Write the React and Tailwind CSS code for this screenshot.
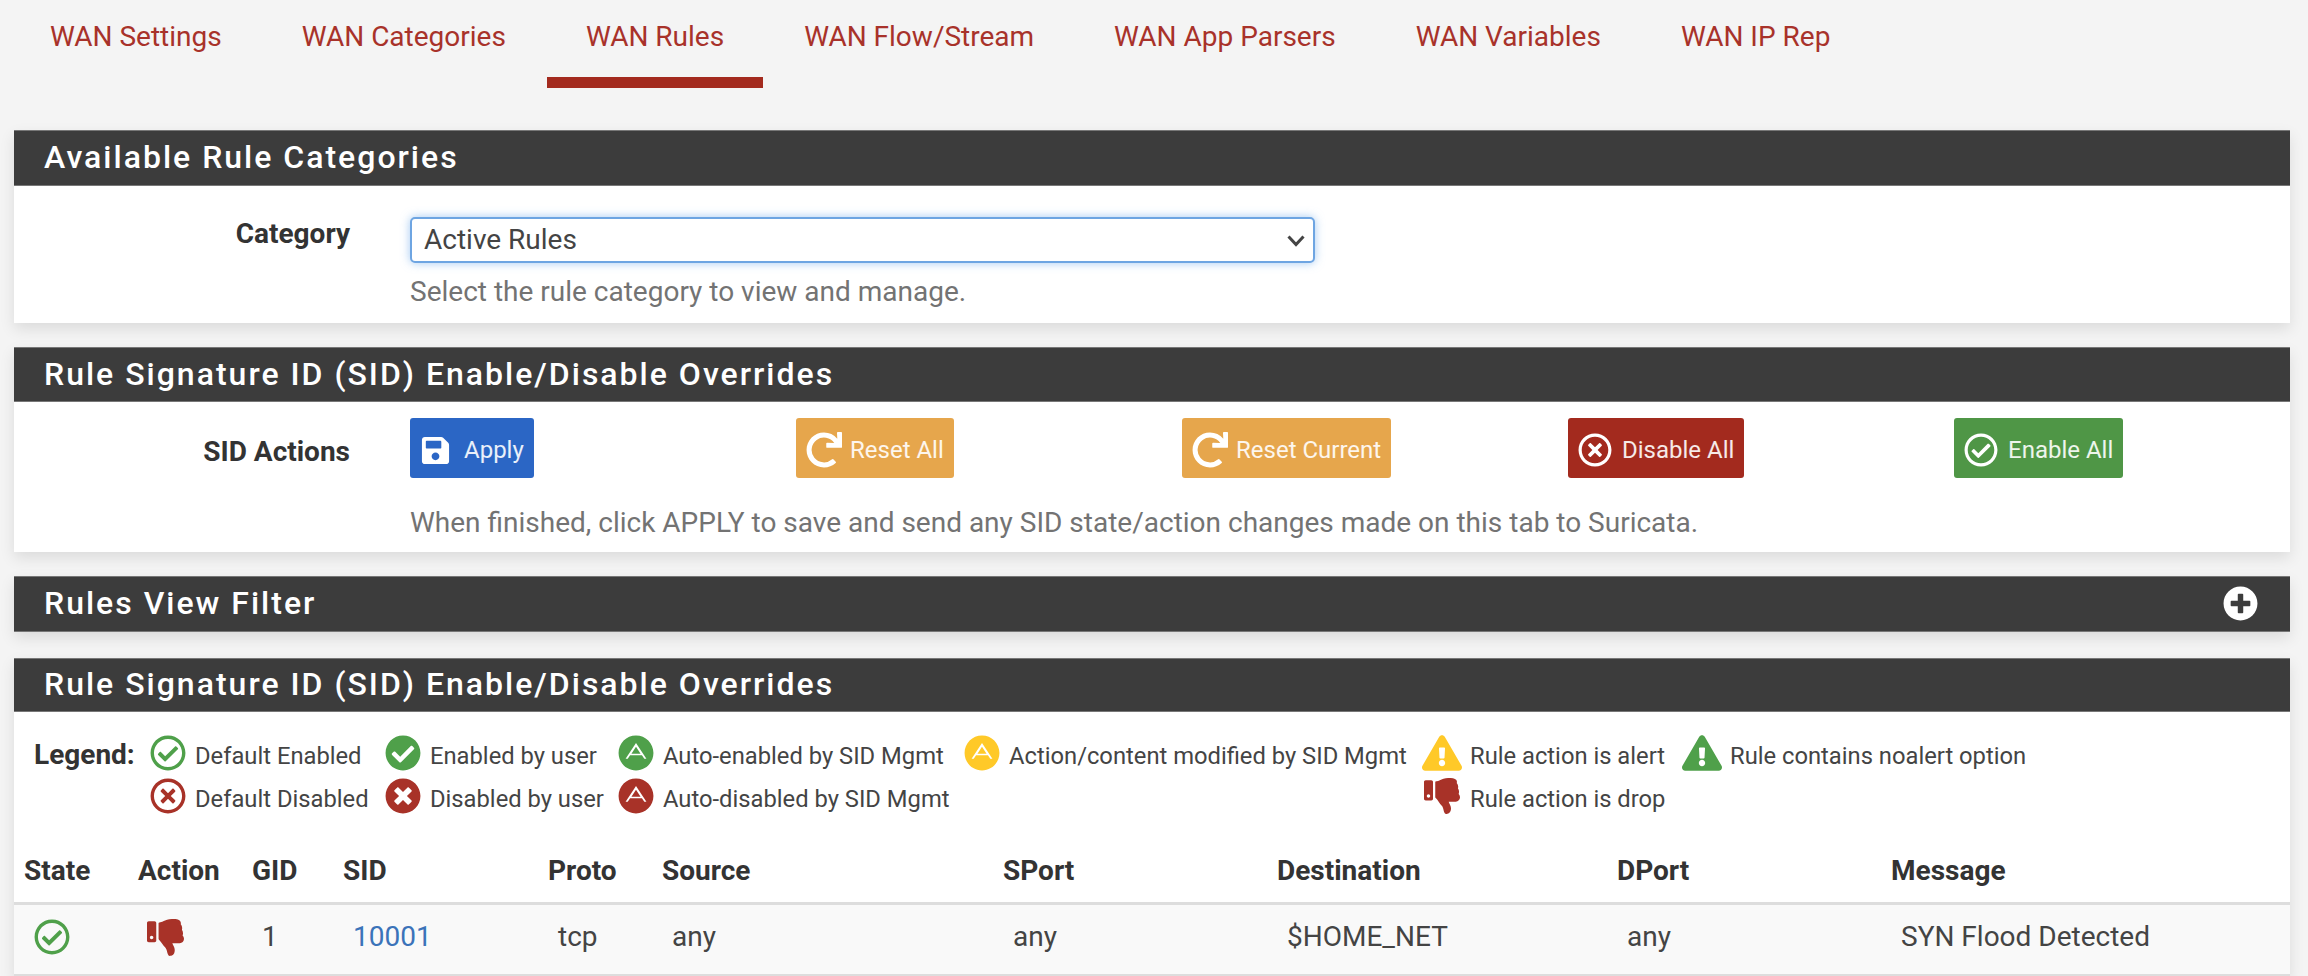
import React from 'react';
import {
    FaRegCheckCircle, FaCheckCircle, FaRegTimesCircle, FaTimesCircle, FaAdn,
    FaExclamationTriangle, FaThumbsDown, FaSave, FaRedo, FaPlusCircle
} from 'react-icons/fa';

const tabs = ['WAN Settings', 'WAN Categories', 'WAN Rules', 'WAN Flow/Stream', 'WAN App Parsers', 'WAN Variables', 'WAN IP Rep'];

const Panel = ({ title, right, headClass, children }) => (
    <section className="bg-white shadow-[0_6px_14px_rgba(0,0,0,0.10)]">
        <h2 className={`flex items-center justify-between bg-[#3c3c3c] border-y border-[#777] pb-[2px] pl-[30px] pr-[32px] text-[32px] font-medium tracking-[2px] text-white ${headClass}`}>
            {title}
            {right}
        </h2>
        {children}
    </section>
);

const ActionButton = ({ icon: Icon, color, iconClass, gap, children }) => (
    <div className="w-[386px] shrink-0">
        <button className={`flex h-[60px] items-center rounded-[3px] px-[10px] pt-[4px] text-[24px] text-white/90 ${color} ${gap}`}>
            <Icon className={`text-white ${iconClass}`} />
            {children}
        </button>
    </div>
);

const LegendItem = ({ icon: Icon, color, wide, children }) => (
    <div className="flex h-[43px] items-center">
        <Icon className={`-mt-[2px] shrink-0 text-[36px] ${color} ${wide ? 'w-[40px]' : 'w-[36px]'}`} />
        <span className={`mt-[6px] whitespace-nowrap text-[23.75px] text-[#444] ${wide ? 'ml-[8px]' : 'ml-[9px]'}`}>{children}</span>
    </div>
);

const App = () => {
    return (
        <div className="h-[976px] overflow-hidden bg-[#f4f4f4] font-['Roboto',sans-serif]">
            {/* Tabs */}
            <nav className="flex pl-[10px] h-[88px]">
                {tabs.map((t) => (
                    <a
                        key={t}
                        className={`flex h-[88px] items-start whitespace-nowrap pt-[16px] text-[28px] text-[#a8322a] ${t === 'WAN Rules' ? 'mx-[1px] border-b-[11px] border-[#a32a1e] px-[39px]' : 'px-[40px]'}`}
                    >
                        {t}
                    </a>
                ))}
            </nav>

            <main className="ml-[14px] mr-[18px] mt-[42px] flex flex-col gap-[24px]">
                <Panel title="Available Rule Categories" headClass="h-[56px]">
                    <div className="flex h-[137px]">
                        <label className="w-[336px] shrink-0 pt-[31px] text-right text-[28px] font-bold leading-[34px] text-[#333]">Category</label>
                        <div className="ml-[60px] pt-[31px]">
                            <div className="relative w-[905px]">
                                <select className="h-[46px] w-full appearance-none rounded-[5px] border-2 border-[#6ea5e2] bg-white pb-[9px] pl-[12px] text-[28px] text-[#444] shadow-[0_0_10px_rgba(102,165,233,0.6)] outline-none">
                                    <option>Active Rules</option>
                                </select>
                                <svg viewBox="0 0 18 13" className="absolute right-[10px] top-[17px] h-[13px] w-[18px]" fill="none" stroke="#444" strokeWidth="3">
                                    <path d="M1.5 2.5 L9 10.5 L16.5 2.5" />
                                </svg>
                            </div>
                            <p className="mt-[12px] text-[28px] leading-[34px] text-[#737373]">Select the rule category to view and manage.</p>
                        </div>
                    </div>
                </Panel>

                <Panel title="Rule Signature ID (SID) Enable/Disable Overrides" headClass="h-[55px]">
                    <div className="flex h-[150px]">
                        <label className="w-[336px] shrink-0 pt-[33px] text-right text-[28px] font-bold leading-[34px] text-[#333]">SID Actions</label>
                        <div className="ml-[60px] pt-[16px]">
                            <div className="flex">
                                <ActionButton icon={FaSave} color="bg-[#2b66c5]" iconClass="text-[31px]" gap="gap-[13px]">Apply</ActionButton>
                                <ActionButton icon={FaRedo} color="bg-[#e6a64c]" iconClass="text-[36px]" gap="gap-[8px]">Reset All</ActionButton>
                                <ActionButton icon={FaRedo} color="bg-[#e6a64c]" iconClass="text-[36px]" gap="gap-[8px]">Reset Current</ActionButton>
                                <ActionButton icon={FaRegTimesCircle} color="bg-[#a32a1e]" iconClass="text-[34px]" gap="gap-[10px]">Disable All</ActionButton>
                                <ActionButton icon={FaRegCheckCircle} color="bg-[#4f9646]" iconClass="text-[34px]" gap="gap-[10px]">Enable All</ActionButton>
                            </div>
                            <p className="mt-[28px] text-[28px] leading-[34px] text-[#737373]">When finished, click APPLY to save and send any SID state/action changes made on this tab to Suricata.</p>
                        </div>
                    </div>
                </Panel>

                <Panel
                    title="Rules View Filter"
                    headClass="h-[56px]"
                    right={<FaPlusCircle className="text-[35px] text-white" />}
                />

                <div className="mt-[2px]">
                    <Panel title="Rule Signature ID (SID) Enable/Disable Overrides" headClass="h-[54px]">
                        {/* Legend */}
                        <div className="flex pt-[20px] pl-[20px]">
                            <span className="w-[116px] shrink-0 text-[28px] font-bold leading-[46px] text-[#333]">Legend:</span>
                            <div className="grid grid-cols-[235px_233px_346px_458px_260px_auto]">
                                <LegendItem icon={FaRegCheckCircle} color="text-[#4fa04a]">Default Enabled</LegendItem>
                                <LegendItem icon={FaCheckCircle} color="text-[#4fa04a]">Enabled by user</LegendItem>
                                <LegendItem icon={FaAdn} color="text-[#4fa04a]">Auto-enabled by SID Mgmt</LegendItem>
                                <LegendItem icon={FaAdn} color="text-[#ffc928]">Action/content modified by SID Mgmt</LegendItem>
                                <LegendItem icon={FaExclamationTriangle} color="text-[#ffc928]" wide>Rule action is alert</LegendItem>
                                <LegendItem icon={FaExclamationTriangle} color="text-[#4fa04a]" wide>Rule contains noalert option</LegendItem>
                                <LegendItem icon={FaRegTimesCircle} color="text-[#a83228]">Default Disabled</LegendItem>
                                <LegendItem icon={FaTimesCircle} color="text-[#a83228]">Disabled by user</LegendItem>
                                <LegendItem icon={FaAdn} color="text-[#a83228]">Auto-disabled by SID Mgmt</LegendItem>
                                <div />
                                <LegendItem icon={FaThumbsDown} color="text-[#a83228]" wide>Rule action is drop</LegendItem>
                            </div>
                        </div>

                        {/* Rules table */}
                        <table className="mt-[35px] w-full table-fixed text-[28px] leading-[34px]">
                            <colgroup>
                                <col className="w-[114px]" />
                                <col className="w-[114px]" />
                                <col className="w-[91px]" />
                                <col className="w-[205px]" />
                                <col className="w-[114px]" />
                                <col className="w-[341px]" />
                                <col className="w-[274px]" />
                                <col className="w-[340px]" />
                                <col className="w-[274px]" />
                                <col />
                            </colgroup>
                            <thead>
                                <tr className="h-[50px] border-b-[3px] border-[#ddd] text-left text-[#333]">
                                    {['State', 'Action', 'GID', 'SID', 'Proto', 'Source', 'SPort', 'Destination', 'DPort', 'Message'].map((h) => (
                                        <th key={h} className="px-[10px] pb-[13px] font-bold">{h}</th>
                                    ))}
                                </tr>
                            </thead>
                            <tbody>
                                <tr className="h-[72px] border-b-[3px] border-[#ddd] bg-[#f9f9f9] text-[#444]">
                                    <td className="pb-[4px] pl-[20px]"><FaRegCheckCircle className="text-[36px] text-[#4fa04a]" /></td>
                                    <td className="pb-[4px] pl-[19px]"><FaThumbsDown className="text-[37px] text-[#a83228]" /></td>
                                    <td className="pb-[4px] pl-[20px]">1</td>
                                    <td className="pb-[4px] pl-[20px] text-[#3b73b9]">10001</td>
                                    <td className="pb-[4px] pl-[20px]">tcp</td>
                                    <td className="pb-[4px] pl-[20px]">any</td>
                                    <td className="pb-[4px] pl-[20px]">any</td>
                                    <td className="pb-[4px] pl-[20px]">$HOME_NET</td>
                                    <td className="pb-[4px] pl-[20px]">any</td>
                                    <td className="pb-[4px] pl-[20px]">SYN Flood Detected</td>
                                </tr>
                            </tbody>
                        </table>
                    </Panel>
                </div>
            </main>
        </div>
    );
};

export default App;
